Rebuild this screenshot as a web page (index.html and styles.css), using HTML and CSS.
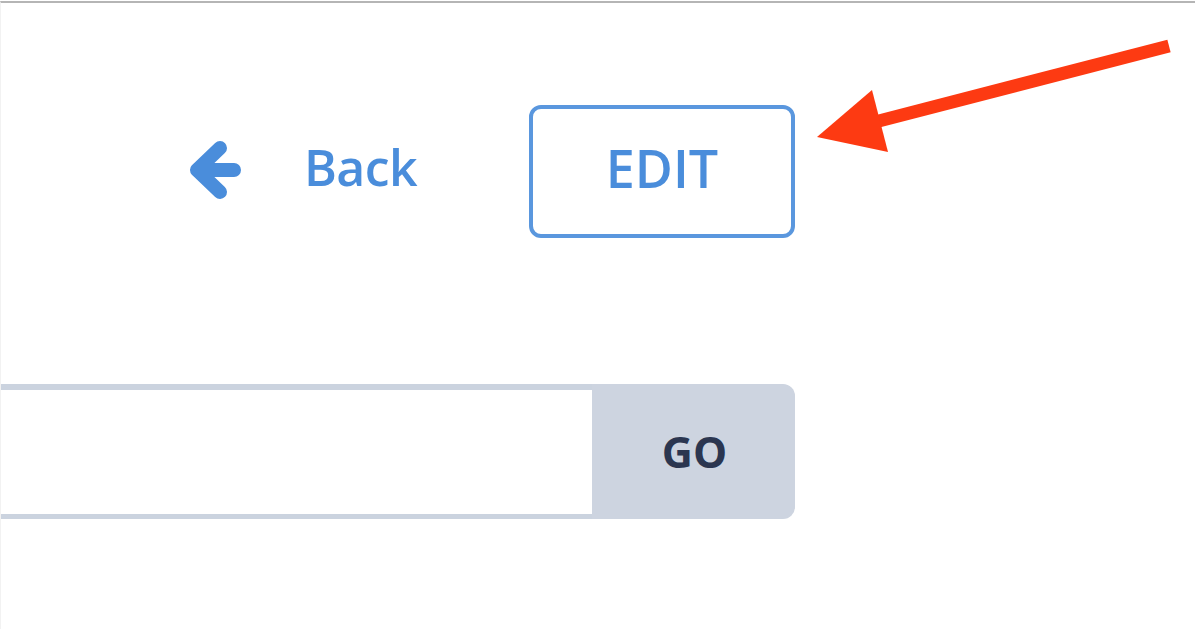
FILE: index.html
```html
<!DOCTYPE html>
<html lang="en">
<head>
<meta charset="utf-8">
<title>Edit</title>
<link rel="stylesheet" href="styles.css">
</head>
<body>
<div class="page">
  <div class="content">
    <div class="actions">
      <a class="back" href="#">
        <svg class="back-icon" width="56" height="62" viewBox="0 0 56 62" aria-hidden="true">
          <path d="M33 9 L10 31 L33 53 M10 31 L47 31" fill="none" stroke="#4a8ddb" stroke-width="14" stroke-linecap="round" stroke-linejoin="round"/>
        </svg>
        <span class="back-label">Back</span>
      </a>
      <button class="edit" type="button">EDIT</button>
    </div>
    <form class="search">
      <input class="search-input" type="text" aria-label="Search">
      <button class="go" type="button">GO</button>
    </form>
  </div>
  <svg class="annotation" width="1195" height="200" viewBox="0 0 1195 200" aria-hidden="true">
    <line x1="1169" y1="46" x2="875" y2="122" stroke="#fd3a12" stroke-width="13" stroke-linecap="butt"/>
    <polygon points="817,137 872,90 888,152" fill="#fd3a12"/>
  </svg>
</div>
</body>
</html>
```

FILE: styles.css
```css
html, body {
  margin: 0;
  padding: 0;
  background: #ffffff;
}

body {
  font-family: "Open Sans", "Liberation Sans", sans-serif;
}

.page {
  position: relative;
  min-height: 629px;
  box-sizing: border-box;
  margin-top: 1px;
  border-top: 2px solid #b5b5b5;
  border-left: 1px solid #f2f2f2;
  overflow: hidden;
}

.content {
  width: 794px;
  display: flex;
  flex-direction: column;
}

.actions {
  display: flex;
  align-items: center;
  justify-content: flex-end;
  margin-top: 102px;
}

.back {
  display: flex;
  align-items: center;
  gap: 61px;
  text-decoration: none;
  color: #4a8ddb;
  margin-right: 112px;
  padding-bottom: 10px;
}

.back-icon {
  display: block;
  margin-top: 6px;
}

.back-label {
  font-size: 50px;
  font-weight: 600;
  line-height: 1;
  letter-spacing: -0.6px;
}

.edit {
  box-sizing: border-box;
  width: 266px;
  height: 133px;
  border: 4px solid #5a97de;
  border-radius: 12px;
  background: #ffffff;
  color: #4a8ddb;
  font-family: "Open Sans", "Liberation Sans", sans-serif;
  font-size: 52px;
  font-weight: 600;
  padding: 0 0 8px 0;
  cursor: pointer;
}

.search {
  display: flex;
  margin: 146px 0 0 -4px;
  height: 135px;
}

.search-input {
  flex: 1;
  box-sizing: border-box;
  height: 135px;
  border: 6px solid #cbd3df;
  border-bottom-width: 5px;
  border-right: none;
  border-left: none;
  border-radius: 0;
  background: #ffffff;
  margin: 0;
  outline: none;
}

.go {
  box-sizing: border-box;
  width: 203px;
  height: 135px;
  border: none;
  border-radius: 0 12px 12px 0;
  background: #cdd4e0;
  color: #2b3650;
  font-family: "Open Sans", "Liberation Sans", sans-serif;
  font-size: 43px;
  font-weight: 700;
  padding: 0;
  padding-left: 2px;
  cursor: pointer;
}

.annotation {
  position: absolute;
  top: -3px;
  left: -1px;
  pointer-events: none;
}
```
